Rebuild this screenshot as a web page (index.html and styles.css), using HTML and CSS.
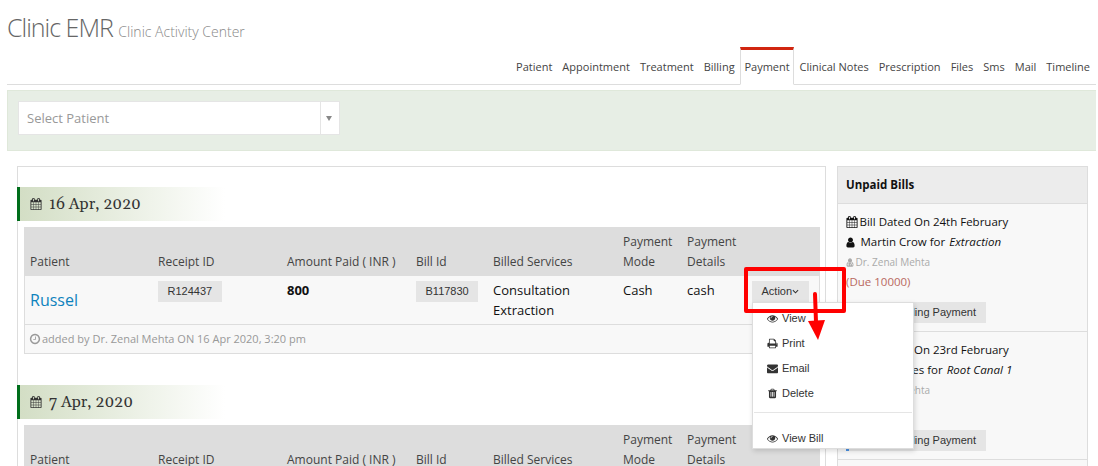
FILE: index.html
```
<!DOCTYPE html>
<html lang="en">
<head>
    <meta charset="UTF-8">
    <meta name="viewport" content="width=device-width, initial-scale=1.0">
    <title>Clinic EMR - Payment</title>
    <link rel="stylesheet" href="styles.css">
</head>
<body>
    <svg class="sprite" width="0" height="0">
        <symbol id="calendar" viewBox="0 0 1792 1792"><path d="M192 1664h288v-288h-288v288zm352 0h320v-288h-320v288zm-352-352h288v-320h-288v320zm352 0h320v-320h-320v320zm-352-384h288v-288h-288v288zm736 736h320v-288h-320v288zm-384-736h320v-288h-320v288zm768 736h288v-288h-288v288zm-384-352h320v-320h-320v320zm-352-864v-288q0-13-9.500-22.500t-22.500-9.500h-64q-13 0-22.500 9.500t-9.500 22.500v288q0 13 9.500 22.500t22.500 9.500h64q13 0 22.500-9.500t9.500-22.500zm736 864h288v-320h-288v320zm-384-384h320v-288h-320v288zm384 0h288v-288h-288v288zm32-480v-288q0-13-9.500-22.500t-22.500-9.500h-64q-13 0-22.500 9.500t-9.500 22.500v288q0 13 9.500 22.500t22.500 9.500h64q13 0 22.500-9.500t9.500-22.500zm384-64v1280q0 52-38 90t-90 38h-1408q-52 0-90-38t-38-90v-1280q0-52 38-90t90-38h128v-96q0-66 47-113t113-47h64q66 0 113 47t47 113v96h384v-96q0-66 47-113t113-47h64q66 0 113 47t47 113v96h128q52 0 90 38t38 90z"/></symbol>
        <symbol id="eye" viewBox="0 0 1792 1792"><path d="M1664 960q-152-236-381-353 61 104 61 225 0 185-131.500 316.500t-316.500 131.500-316.500-131.500-131.500-316.500q0-121 61-225-229 117-381 353 133 205 333.500 326.500t434.500 121.500 434.500-121.500 333.500-326.500zm-720-384q0-20-14-34t-34-14q-125 0-214.500 89.500t-89.500 214.500q0 20 14 34t34 14 34-14 14-34q0-86 61-147t147-61q20 0 34-14t14-34zm848 384q0 34-20 69-140 230-376.500 368.500t-499.500 138.500-499.500-139-376.500-368q-20-35-20-69t20-69q140-229 376.500-368t499.500-139 499.500 139 376.500 368q20 35 20 69z"/></symbol>
        <symbol id="print" viewBox="0 0 1792 1792"><path d="M448 1536h896v-256h-896v256zm0-640h896v-384h-160q-40 0-68-28t-28-68v-160h-640v640zm1152 64q0-26-19-45t-45-19-45 19-19 45 19 45 45 19 45-19 19-45zm128 0v416q0 13-9.500 22.500t-22.500 9.500h-224v160q0 40-28 68t-68 28h-960q-40 0-68-28t-28-68v-160h-224q-13 0-22.500-9.500t-9.500-22.500v-416q0-79 56.500-135.500t135.500-56.500h64v-544q0-40 28-68t68-28h672q40 0 88 20t76 48l152 152q28 28 48 76t20 88v256h64q79 0 135.500 56.500t56.500 135.500z"/></symbol>
        <symbol id="envelope" viewBox="0 0 1792 1792"><path d="M1792 710v794q0 66-47 113t-113 47h-1472q-66 0-113-47t-47-113v-794q44 49 101 87 362 246 497 345 57 42 92.500 65.500t94.500 48 110 24.500h2q51 0 110-24.500t94.500-48 92.500-65.500q170-123 498-345 57-39 100-87zm0-294q0 79-49 151t-122 123q-376 261-468 325-10 7-42.500 30.500t-54 38-52 32.500-57.500 27-50 9h-2q-23 0-50-9t-57.500-27-52-32.500-54-38-42.500-30.500q-91-64-262-182.500t-205-142.500q-62-42-117-115.500t-55-136.500q0-78 41.500-130t118.500-52h1472q65 0 112.500 47t47.500 113z"/></symbol>
        <symbol id="trash" viewBox="0 0 1792 1792"><path d="M704 1376v-704q0-14-9-23t-23-9h-64q-14 0-23 9t-9 23v704q0 14 9 23t23 9h64q14 0 23-9t9-23zm256 0v-704q0-14-9-23t-23-9h-64q-14 0-23 9t-9 23v704q0 14 9 23t23 9h64q14 0 23-9t9-23zm256 0v-704q0-14-9-23t-23-9h-64q-14 0-23 9t-9 23v704q0 14 9 23t23 9h64q14 0 23-9t9-23zm-544-992h448l-48-117q-7-9-17-11h-317q-10 2-17 11zm928 32v64q0 14-9 23t-23 9h-96v948q0 83-47 143.500t-113 60.500h-832q-66 0-113-58.500t-47-141.500v-952h-96q-14 0-23-9t-9-23v-64q0-14 9-23t23-9h309l70-167q15-37 54-63t79-26h320q40 0 79 26t54 63l70 167h309q14 0 23 9t9 23z"/></symbol>
        <symbol id="clock" viewBox="0 0 1792 1792"><path d="M1024 544v448q0 14-9 23t-23 9h-320q-14 0-23-9t-9-23v-64q0-14 9-23t23-9h224v-352q0-14 9-23t23-9h64q14 0 23 9t9 23zm416 352q0-148-73-273t-198-198-273-73-273 73-198 198-73 273 73 273 198 198 273 73 273-73 198-198 73-273zm224 0q0 209-103 385.500t-279.500 279.500-385.500 103-385.500-103-279.500-279.500-103-385.500 103-385.500 279.500-279.500 385.500-103 385.500 103 279.500 279.500 103 385.500z"/></symbol>
        <symbol id="user" viewBox="192 64 1408 1664"><path d="M1536 1399q0 109-62.500 187t-150.500 78h-854q-88 0-150.500-78t-62.500-187q0-85 8.500-160.500t31.500-152 58.500-131 94-89 134.500-34.500q131 128 313 128t313-128q76 0 134.500 34.500t94 89 58.500 131 31.500 152 8.500 160.500zm-256-887q0 159-112.500 271.500t-271.500 112.500-271.500-112.500-112.500-271.500 112.500-271.500 271.500-112.500 271.500 112.500 112.500 271.500z"/></symbol>
        <symbol id="user-md" viewBox="192 64 1408 1664"><path d="M1536 1399q0 109-62.500 187t-150.500 78h-854q-88 0-150.500-78t-62.500-187q0-85 8.500-160.500t31.500-152 58.500-131 94-89 134.500-34.500q131 128 313 128t313-128q76 0 134.500 34.500t94 89 58.500 131 31.500 152 8.500 160.500zm-256-887q0 159-112.500 271.500t-271.500 112.500-271.500-112.500-112.500-271.500 112.500-271.500 271.500-112.500 271.500 112.500 112.500 271.500z"/><g fill="none" stroke="#f7f7f7" stroke-width="110"><path d="M560 880v340M1180 880v240M980 1440v-120q0-190 200-190t200 190v120"/><circle cx="560" cy="1320" r="100"/></g></symbol>
        <symbol id="angle-down" viewBox="0 0 8 8"><path d="M1 2.500l3 3 3-3" fill="none" stroke="currentColor" stroke-width="1.200"/></symbol>
    </svg>

    <div class="page">
        <header class="page-header">
            <h1>Clinic EMR <small>Clinic Activity Center</small></h1>
            <nav class="tabs">
                <a>Patient</a>
                <a>Appointment</a>
                <a>Treatment</a>
                <a>Billing</a>
                <a class="active">Payment</a>
                <a>Clinical Notes</a>
                <a>Prescription</a>
                <a>Files</a>
                <a>Sms</a>
                <a>Mail</a>
                <a>Timeline</a>
            </nav>
        </header>

        <div class="filter">
            <div class="select">
                <span class="select-text">Select Patient</span>
                <span class="select-arrow"></span>
            </div>
        </div>

        <div class="content">
            <main class="payments">
                <section class="day">
                    <h2 class="date"><svg class="icon"><use href="#calendar"/></svg>16 Apr, 2020</h2>
                    <div class="table">
                        <div class="row head">
                            <span>Patient</span>
                            <span>Receipt ID</span>
                            <span>Amount Paid ( INR )</span>
                            <span>Bill Id</span>
                            <span>Billed Services</span>
                            <span>Payment Mode</span>
                            <span>Payment Details</span>
                            <span></span>
                        </div>
                        <div class="row entry">
                            <span class="patient">Russel</span>
                            <span><span class="btn">R124437</span></span>
                            <b>800</b>
                            <span><span class="btn">B117830</span></span>
                            <span>Consultation<br>Extraction</span>
                            <span>Cash</span>
                            <span>cash</span>
                            <div class="action">
                                <span class="btn">Action<svg class="caret"><use href="#angle-down"/></svg></span>
                                <ul class="menu">
                                    <li><svg class="icon"><use href="#eye"/></svg>View</li>
                                    <li><svg class="icon"><use href="#print"/></svg>Print</li>
                                    <li><svg class="icon"><use href="#envelope"/></svg>Email</li>
                                    <li><svg class="icon"><use href="#trash"/></svg>Delete</li>
                                    <li class="divider"></li>
                                    <li><svg class="icon"><use href="#eye"/></svg>View Bill</li>
                                </ul>
                            </div>
                        </div>
                        <div class="added"><svg class="icon"><use href="#clock"/></svg>added by Dr. Zenal Mehta ON 16 Apr 2020, 3:20 pm</div>
                    </div>
                </section>

                <section class="day">
                    <h2 class="date"><svg class="icon"><use href="#calendar"/></svg>7 Apr, 2020</h2>
                    <div class="table">
                        <div class="row head">
                            <span>Patient</span>
                            <span>Receipt ID</span>
                            <span>Amount Paid ( INR )</span>
                            <span>Bill Id</span>
                            <span>Billed Services</span>
                            <span>Payment Mode</span>
                            <span>Payment Details</span>
                            <span></span>
                        </div>
                    </div>
                </section>
            </main>

            <aside class="unpaid">
                <h3>Unpaid Bills</h3>
                <div class="bill">
                    <div><svg class="icon"><use href="#calendar"/></svg>Bill Dated On 24th February</div>
                    <div><svg class="icon user"><use href="#user"/></svg><span>Martin Crow for <i>Extraction</i></span></div>
                    <div class="doctor"><svg class="icon"><use href="#user-md"/></svg>Dr. Zenal Mehta</div>
                    <div class="due">(Due 10000)</div>
                    <span class="btn">Add Pending Payment</span>
                </div>
                <div class="bill">
                    <div><svg class="icon"><use href="#calendar"/></svg>Bill Dated On 23rd February</div>
                    <div><svg class="icon user"><use href="#user"/></svg><span>Peter James for <i>Root Canal 1</i></span></div>
                    <div class="doctor"><svg class="icon"><use href="#user-md"/></svg>Dr. Zenal Mehta</div>
                    <div class="due">(Due 500)</div>
                    <span class="btn marked">Add Pending Payment</span>
                </div>
            </aside>
        </div>
    </div>

    <!-- highlight around the action button -->
    <svg class="callout" width="110" height="80" viewBox="740 265 110 80">
        <rect x="746" y="269" width="98" height="42" fill="none" stroke="#f00" stroke-width="4" stroke-linejoin="round"/>
        <path d="M815 294l1 28" stroke="#f00" stroke-width="4" stroke-linecap="round"/>
        <path d="M808 321l17-1-7 20z" fill="#f00"/>
    </svg>
</body>
</html>
```
FILE: styles.css
```
* {
    box-sizing: border-box;
}
body {
    margin: 0;
    height: 466px;
    overflow: hidden;
    position: relative;
    background: #fff;
    color: #111;
    font-family: "Open Sans", sans-serif;
    font-size: 13px;
    line-height: 20px;
}
.sprite {
    position: absolute;
}
.page {
    padding: 0 2px 0 7px;
}
.icon {
    width: 12px;
    height: 12px;
    fill: currentColor;
    flex: none;
}
.page-header {
    height: 85px;
    border-bottom: 1px solid #ddd;
    display: flex;
    flex-direction: column;
    justify-content: space-between;
}
h1 {
    margin: 12px 0 0;
    font-size: 25px;
    line-height: 30px;
    font-weight: 300;
    letter-spacing: -1px;
    color: #666;
}
h1 small {
    font-size: 14px;
    letter-spacing: 0;
    color: #888;
}
.tabs {
    display: flex;
    justify-content: flex-end;
    margin-bottom: -1px;
    padding-right: 1px;
}
.tabs a {
    height: 38px;
    padding: 10px 4px 0;
    border: 1px solid transparent;
    border-top: 0;
    font-size: 11px;
    color: #444;
}
.tabs .active {
    background: #fff;
    padding: 7px 3.8px 0;
    border-color: #ddd;
    border-bottom-color: #fff;
    border-top: 3px solid #d12610;
}
.filter {
    margin-top: 5px;
    height: 61px;
    padding: 10px;
    background: #e7eee5;
    border: 1px solid #dfe8da;
    border-right: 0;
}
.select {
    display: flex;
    width: 322px;
    height: 34px;
    background: #fff;
    border: 1px solid #e5e5e5;
    color: #999;
}
.select-text {
    flex: 1;
    padding: 6px 8px;
}
.select-arrow {
    width: 19px;
    border-left: 1px solid #e5e5e5;
    display: flex;
    align-items: center;
    justify-content: center;
    padding-right: 2px;
}
.select-arrow::before {
    content: "";
    border: 3px solid transparent;
    border-top: 5px solid #888;
    border-bottom: 0;
}
.content {
    display: flex;
    gap: 11px;
    padding: 15px 8px 0 10px;
}
.payments {
    width: 809px;
    height: 300px;
    border: 1px solid #ddd;
    border-bottom: 0;
    padding-top: 20px;
}
.day {
    height: 198px;
}
.day:last-child {
    height: 81px;
}
.date {
    display: flex;
    align-items: center;
    gap: 7px;
    width: 208px;
    height: 34px;
    margin: 0 0 6px -1px;
    padding-left: 10px;
    border-left: 3px solid #006e1b;
    background: linear-gradient(to right, #d3dec5, #fff);
    font-family: Georgia, Gelasio, serif;
    font-size: 16px;
    font-weight: normal;
    color: #333;
}
.table {
    margin: 0 5px 0 6px;
    border: 1px solid #ddd;
    background: #f8f8f8;
}
.row {
    display: grid;
    grid-template-columns: 128px 129px 129px 77px 130px 64px 65px 1fr;
    padding-left: 5px;
}
.head {
    height: 48px;
    padding-bottom: 4px;
    background: #ddd;
    color: #444;
    font-size: 12px;
    align-items: end;
}
.entry {
    height: 49px;
    padding-top: 4px;
    border-bottom: 1px solid #ddd;
}
.patient {
    font-size: 16px;
    color: #0d82bd;
    padding-top: 10px;
}
.btn {
    display: inline-block;
    height: 21px;
    padding: 0 9.5px;
    background: #e5e5e5;
    color: #333;
    font: 11px/21px "Liberation Sans", sans-serif;
    vertical-align: top;
    margin-top: 1px;
}
.caret {
    width: 7px;
    height: 7px;
}
.action {
    position: relative;
}
.menu {
    position: absolute;
    z-index: 2;
    top: 22px;
    left: 0;
    width: 162px;
    height: 147px;
    margin: 0;
    padding: 3px 1px 0;
    list-style: none;
    background: #fff;
    border: 1px solid #ddd;
    box-shadow: 1px 2px 5px rgba(0,0,0,0.15);
    font: 11px/25px "Liberation Sans", sans-serif;
    color: #333;
}
.menu li {
    display: flex;
    align-items: center;
    gap: 4px;
    padding-left: 13px;
    height: 25px;
}
.menu .icon {
    width: 11px;
    height: 11px;
}
.menu .divider {
    height: 1px;
    margin: 6px 0 13px;
    background: #e5e5e5;
}
.added {
    display: flex;
    align-items: center;
    gap: 1px;
    height: 28px;
    padding-left: 4px;
    font-size: 11px;
    color: #999;
}
.unpaid {
    width: 251px;
    height: 300px;
    border: 1px solid #ddd;
    border-bottom: 0;
    background: #f8f8f8;
}
.unpaid h3 {
    height: 37px;
    margin: 0;
    padding: 8px;
    background: #ececec;
    border-bottom: 1px solid #ddd;
    font-size: 11.5px;
}
.bill {
    height: 128px;
    padding: 8px 8px 0;
    border-bottom: 1px solid #ddd;
    font-size: 11.5px;
}
.bill div {
    display: flex;
    align-items: center;
    gap: 1.5px;
    white-space: pre;
}
.bill i {
    margin-left: 1px;
    letter-spacing: 0.08px;
}
.bill .user {
    width: 9px;
    height: 11px;
    margin-right: 4px;
}
.bill .doctor {
    font-size: 10px;
    color: #aaa;
}
.doctor .icon {
    width: 8px;
    height: 9px;
}
.bill .due {
    color: #b86860;
}
.bill .btn {
    width: 140px;
    margin-top: 10px;
    padding-right: 10px;
    text-align: right;
}
.bill .marked {
    background: linear-gradient(#4a90e2, #4a90e2) left bottom / 3px 2px no-repeat #e5e5e5;
}
.callout {
    position: absolute;
    z-index: 3;
    left: 740px;
    top: 265px;
}
```
